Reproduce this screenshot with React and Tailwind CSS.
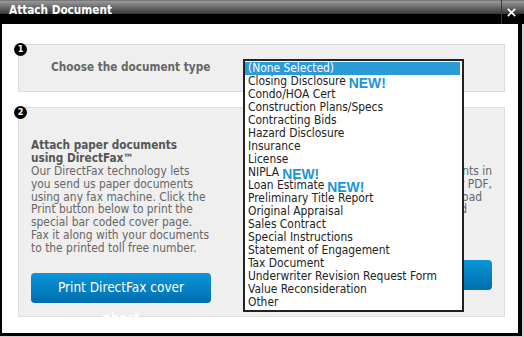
const docTypes = [
  { label: "(None Selected)", selected: true },
  { label: "Closing Disclosure", isNew: true },
  { label: "Condo/HOA Cert" },
  { label: "Construction Plans/Specs" },
  { label: "Contracting Bids" },
  { label: "Hazard Disclosure" },
  { label: "Insurance" },
  { label: "License" },
  { label: "NIPLA", isNew: true },
  { label: "Loan Estimate", isNew: true },
  { label: "Preliminary Title Report" },
  { label: "Original Appraisal" },
  { label: "Sales Contract" },
  { label: "Special Instructions" },
  { label: "Statement of Engagement" },
  { label: "Tax Document" },
  { label: "Underwriter Revision Request Form" },
  { label: "Value Reconsideration" },
  { label: "Other" },
];

function StepBadge({ n }) {
  return (
    <div className="
      absolute -left-[5px] -top-[2px]
      w-[13px] h-[13px]
      rounded-full
      bg-black
      text-white text-[9px] leading-none font-bold
      flex items-center justify-center
    ">
      {n}
    </div>
  );
}

export default function App() {
  return (
    <div className="
      w-[524px] h-[337px]
      bg-[#cfcfcf]
      overflow-hidden
      font-['DejaVu_Sans_Condensed','DejaVu_Sans',sans-serif]
    ">

      {/* TITLE BAR */}

      <div className="
        flex
        w-[524px] h-[24px]
        bg-[linear-gradient(to_bottom,#555_0px,#9a9a9a_1px,#5c5c5c_9px,#3a3a3a_13.5px,#000_14px,#000_24px)]
      ">
        <div className="
          flex-1
          pl-[9px] pt-[3px]
          text-[11.7px] leading-[15px] font-bold
          text-white
        ">
          Attach Document
        </div>

        <div className="
          w-[23px]
          border-l border-[#3a3a3a]
          flex items-center justify-center
          pr-[3px]
        ">
          <svg width="9" height="9" viewBox="0 0 9 9">
            <path d="M0.8 0.8 L8.2 8.2 M8.2 0.8 L0.8 8.2" stroke="#fff" strokeWidth="1.7" />
          </svg>
        </div>
      </div>

      {/* BODY */}

      <div className="
        w-[522px] h-[312px]
        bg-white
        border-l-[2px] border-r-[4px] border-b-[3px] border-black
        pl-[16px] pr-[13px] pt-[20px]
        flex flex-col gap-[15px]
      ">

        {/* STEP 1 */}

        <div className="
          relative
          h-[48px]
          bg-[#efefef]
          border border-[#dcdcdc]
          flex items-center
          pl-[32px]
        ">
          <StepBadge n="1" />

          <div className="text-[11.7px] font-bold text-[#666]">
            Choose the document type
          </div>

          {/* OPEN LISTBOX */}

          <div className="
            absolute left-[224px] top-[14px] z-10
            w-[221px] h-[253px]
            bg-white
            border-2 border-[#222]
            py-[1px]
          ">
            {docTypes.map((d) => (
              <div
                key={d.label}
                className={`
                  h-[13px]
                  mr-[2px]
                  pl-[3px]
                  flex items-center gap-[3px]
                  whitespace-nowrap
                  text-[11.9px] leading-[13px]
                  ${d.selected ? "bg-[#2a9ad8] text-white" : "text-[#222]"}
                `}
              >
                {d.label}
                {d.isNew && (
                  <span className="
                    font-['Liberation_Sans',sans-serif]
                    font-bold
                    text-[13.9px] leading-none
                    text-[#1b95d9]
                    translate-y-[2px]
                  ">
                    NEW!
                  </span>
                )}
              </div>
            ))}
          </div>
        </div>

        {/* STEP 2 */}

        <div className="
          relative
          h-[210px]
          bg-[#efefef]
          border border-[#dcdcdc]
          pl-[12px] pr-[12px] pt-[31px]
          grid grid-cols-2
        ">
          <StepBadge n="2" />

          {/* DIRECTFAX */}

          <div className="flex flex-col">
            <div className="text-[11.7px] leading-[13px] font-bold text-[#555]">
              Attach paper documents<br />
              using DirectFax™
            </div>

            <div className="text-[11.9px] leading-[12.8px] text-[#666]">
              Our DirectFax technology lets<br />
              you send us paper documents<br />
              using any fax machine. Click the<br />
              Print button below to print the<br />
              special bar coded cover page.<br />
              Fax it along with your documents<br />
              to the printed toll free number.
            </div>

            <button className="
              mt-[18px]
              w-[180px] h-[30px]
              rounded-[4px]
              bg-[linear-gradient(to_bottom,#0b95d9,#006eae)]
              text-white text-[13.5px]
            ">
              Print DirectFax cover
            </button>

            <div className="
              w-[180px]
              mt-[8px]
              text-center
              text-white text-[13px] leading-[13px] font-bold
            ">
              ghost
            </div>
          </div>

          {/* UPLOAD (mostly under the open list) */}

          <div className="flex flex-col items-end pt-[26px]">
            <div className="text-[11.9px] leading-[12.8px] text-[#666] text-right">
              <div>documents in</div>
              <div>or PDF,</div>
              <div className="pr-[10px]">upload</div>
              <div className="pr-[25px]">and</div>
            </div>

            <button className="
              mt-[44px]
              w-[180px] h-[30px]
              rounded-[4px]
              bg-[linear-gradient(to_bottom,#0b95d9,#006eae)]
            " />
          </div>

        </div>

      </div>

    </div>
  );
}
